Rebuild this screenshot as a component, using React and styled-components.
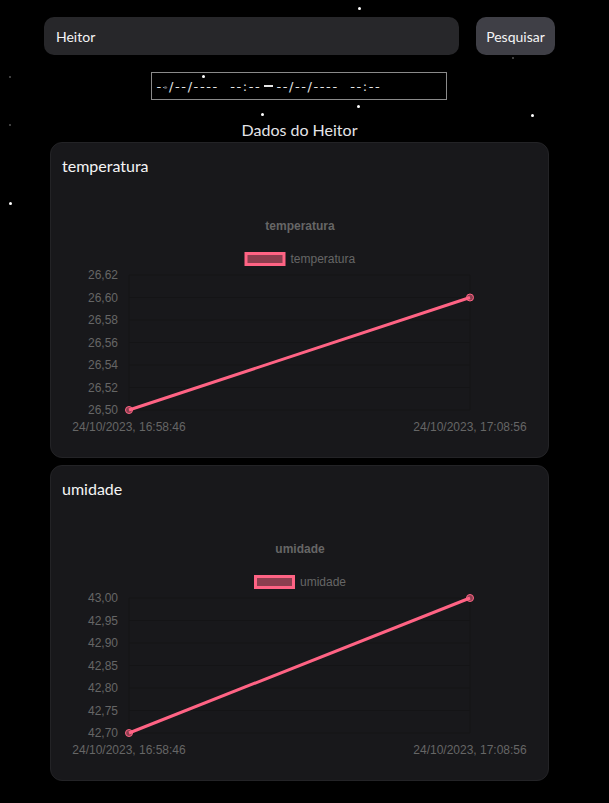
import React from "react";
import styled, { createGlobalStyle } from "styled-components";

const GlobalStyle = createGlobalStyle`
  html, body {
    margin: 0;
    padding: 0;
    background: #000;
  }
  body {
    font-family: "Lato", "Noto Sans", sans-serif;
    color: #e4e4e7;
  }
`;

const Page = styled.div`
  position: relative;
  min-height: 803px;
  padding-top: 17px;
  box-sizing: border-box;
`;

const Stars = styled.div`
  position: absolute;
  inset: 0;
  pointer-events: none;
  z-index: 2;
`;

const Star = styled.span`
  position: absolute;
  width: ${(p) => p.size}px;
  height: ${(p) => p.size}px;
  border-radius: 50%;
  background: ${(p) => (p.dim ? "#555" : "#fff")};
`;

const Column = styled.div`
  width: 511px;
  margin-left: 44px;
  display: flex;
  flex-direction: column;
  align-items: center;
`;

const SearchRow = styled.div`
  width: 100%;
  display: flex;
  gap: 17px;
`;

const SearchInput = styled.div`
  flex: 1;
  height: 38px;
  border-radius: 10px;
  background: #27272a;
  display: flex;
  align-items: center;
  padding: 0 12px;
  font-size: 14px;
  color: #f4f4f5;
`;

const SearchButton = styled.button`
  width: 79px;
  height: 38px;
  border: none;
  border-radius: 10px;
  background: #3f3f46;
  color: #f4f4f5;
  font-family: "Lato", "Noto Sans", sans-serif;
  font-size: 14px;
  padding: 0;
`;

const DateRange = styled.div`
  margin-top: 17px;
  margin-left: -2px;
  width: 296px;
  height: 28px;
  box-sizing: border-box;
  border: 1px solid #8a8a8a;
  display: flex;
  align-items: center;
  gap: 3px;
  padding-left: 5px;
  font-family: "DejaVu Sans", sans-serif;
  font-size: 13px;
  color: #e5e5e5;
  white-space: pre;
`;

const DatePart = styled.span`
  letter-spacing: 1.6px;
`;

const Dash = styled.span`
  display: inline-block;
  width: 9px;
  height: 1.5px;
  background: #e5e5e5;
`;

const Heading = styled.div`
  margin-top: 18px;
  font-size: 16px;
  line-height: 24px;
  color: #e4e4e7;
`;

const Cards = styled.div`
  width: 499px;
  display: flex;
  flex-direction: column;
  gap: 7px;
`;

const Card = styled.div`
  background: #18181b;
  border: 1px solid #232326;
  border-radius: 12px;
  padding: 11px;
`;

const CardTitle = styled.div`
  font-size: 16px;
  line-height: 24px;
  color: #f4f4f5;
`;

const ChartSvg = styled.svg`
  display: block;
  margin-top: 12px;
  font-family: "Liberation Sans", Arial, sans-serif;
`;

const PINK = "rgb(255, 99, 132)";
const PINK_FILL = "rgba(255, 99, 132, 0.5)";
const TICK = "#666";

const LineChart = ({ label, labelWidth, ticks, values, times }) => {
  const left = 67;
  const right = 408;
  const top = 85;
  const step = 22.5;
  const bottom = top + step * (ticks.length - 1);
  const max = ticks[0];
  const min = ticks[ticks.length - 1];
  const yOf = (v) => bottom - ((v - min) / (max - min)) * (bottom - top);
  const xs = [left, right];
  const legendStart = 238 - (41 + 5 + labelWidth) / 2;

  return (
    <ChartSvg width="475" height="256" viewBox="0 0 475 256">
      <text x="238" y="40" textAnchor="middle" fontSize="12" fontWeight="bold" fill={TICK}>
        {label}
      </text>
      <rect
        x={legendStart + 1.5}
        y="63.5"
        width="38"
        height="11"
        fill={PINK_FILL}
        stroke={PINK}
        strokeWidth="3"
      />
      <text x={legendStart + 46} y="73" fontSize="12" fill={TICK}>
        {label}
      </text>
      {ticks.map((t, i) => (
        <g key={t}>
          <line x1={left} x2={right} y1={top + i * step} y2={top + i * step} stroke="#141416" />
          <text x="56" y={top + i * step + 4} textAnchor="end" fontSize="12" fill={TICK}>
            {t.toFixed(2).replace(".", ",")}
          </text>
        </g>
      ))}
      {xs.map((x, i) => (
        <g key={x}>
          <line x1={x} x2={x} y1={top} y2={bottom} stroke="#141416" />
          <text x={x} y="241" textAnchor="middle" fontSize="12" fill={TICK}>
            {times[i]}
          </text>
        </g>
      ))}
      <polyline
        points={values.map((v, i) => `${xs[i]},${yOf(v)}`).join(" ")}
        fill="none"
        stroke={PINK}
        strokeWidth="3"
      />
      {values.map((v, i) => (
        <circle key={i} cx={xs[i]} cy={yOf(v)} r="3.5" fill={PINK_FILL} stroke={PINK} strokeWidth="1" />
      ))}
    </ChartSvg>
  );
};

const stars = [
  { x: 358, y: 7, size: 3 },
  { x: 202, y: 75, size: 3 },
  { x: 164, y: 86, size: 3, dim: true },
  { x: 357, y: 105, size: 3 },
  { x: 261, y: 113, size: 3 },
  { x: 531, y: 114, size: 3 },
  { x: 9, y: 202, size: 3 },
  { x: 9, y: 76, size: 2, dim: true },
  { x: 9, y: 124, size: 2, dim: true },
  { x: 512, y: 57, size: 2, dim: true },
];

const times = ["24/10/2023, 16:58:46", "24/10/2023, 17:08:56"];

export default function App() {
  return (
    <Page>
      <GlobalStyle />
      <Stars>
        {stars.map((s, i) => (
          <Star key={i} size={s.size} dim={s.dim} style={{ left: s.x, top: s.y }} />
        ))}
      </Stars>
      <Column>
        <SearchRow>
          <SearchInput>Heitor</SearchInput>
          <SearchButton>Pesquisar</SearchButton>
        </SearchRow>
        <DateRange>
          <DatePart>{"--/--/----  --:--"}</DatePart>
          <Dash />
          <DatePart>{"--/--/----  --:--"}</DatePart>
        </DateRange>
        <Heading>Dados do Heitor</Heading>
        <Cards>
          <Card>
            <CardTitle>temperatura</CardTitle>
            <LineChart
              label="temperatura"
              labelWidth={65}
              ticks={[26.62, 26.6, 26.58, 26.56, 26.54, 26.52, 26.5]}
              values={[26.5, 26.6]}
              times={times}
            />
          </Card>
          <Card>
            <CardTitle>umidade</CardTitle>
            <LineChart
              label="umidade"
              labelWidth={46}
              ticks={[43.0, 42.95, 42.9, 42.85, 42.8, 42.75, 42.7]}
              values={[42.7, 43.0]}
              times={times}
            />
          </Card>
        </Cards>
      </Column>
    </Page>
  );
}
